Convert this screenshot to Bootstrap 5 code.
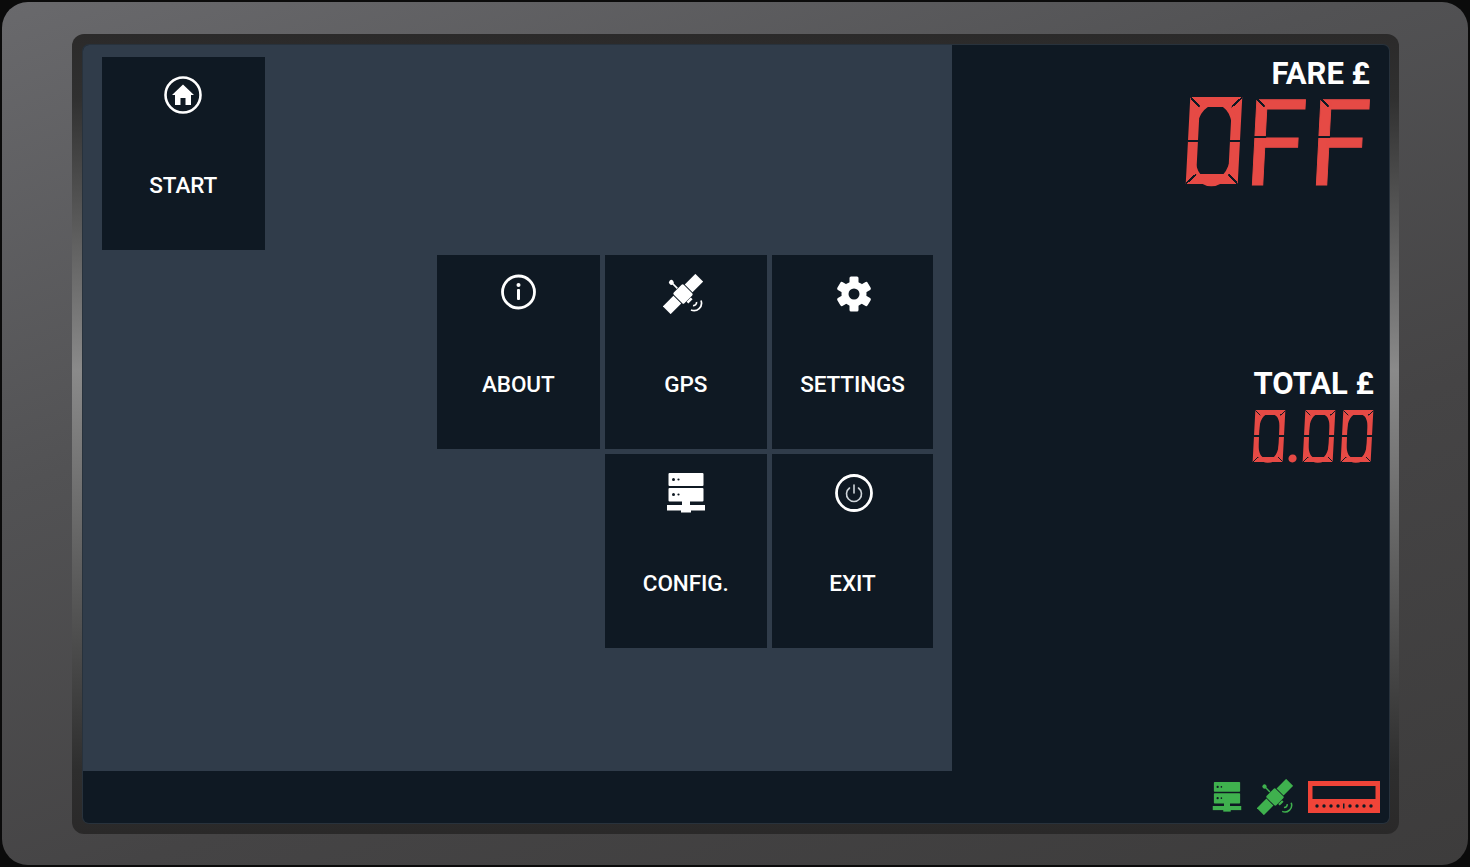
<!DOCTYPE html>
<html lang="en">
<head>
  <meta charset="UTF-8">
  <meta name="viewport" content="width=device-width, initial-scale=1.0">
  <title>Taximeter</title>
  <link href="https://cdn.jsdelivr.net/npm/bootstrap@5.3.0/dist/css/bootstrap.min.css" rel="stylesheet">
  <style>
    html, body { height: 867px; overflow: hidden; }
    body { background: #0b0b0b; padding: 2px; font-family: Roboto, "Liberation Sans", sans-serif; }
    .bezel {
      width: 1466px; height: 863px; padding: 32px 69px 31px 70px; border-radius: 26px;
      background: linear-gradient(160deg, #69696c 0%, #525254 35%, #454445 65%, #3d3c3c 100%);
    }
    .frame {
      height: 100%; padding: 11px 10px 11px 11px; border-radius: 12px;
      background: linear-gradient(to bottom, #2b2a2a 0%, #303030 8%, #8a8a8a 42%, #6b6b6b 60%, #2e2e2e 92%, #2a2929 100%);
    }
    .screen { height: 100%; background: #0f1923; border-radius: 6px; overflow: hidden; box-shadow: 0 0 0 1px #28323c; }
    .left-col { width: 869px; }
    .menu-panel {
      height: 726px; background: #303c4a; padding: 12px 0 0 19px;
      display: grid; gap: 5px;
      grid-template-columns: 162.5px 162.5px 162.5px 162.5px 161px;
      grid-template-rows: 193px 194px 194px;
    }
    .tile { background: #0f1923; color: #fff; padding-top: 19px; }
    .tile-icon { display: block; width: 40px; height: 40px; }
    .tile-shift { margin-left: -6px; }
    .tile-label { margin-top: 59px; font-size: 22.5px; font-weight: 500; line-height: 1; letter-spacing: -.1px; }
    .start-label { margin-top: 58px; }
    .r2c3 { grid-area: 2 / 3; } .r2c4 { grid-area: 2 / 4; } .r2c5 { grid-area: 2 / 5; }
    .r3c4 { grid-area: 3 / 4; } .r3c5 { grid-area: 3 / 5; }
    .readout-col { padding: 13px 0 8px; color: #fff; }
    .readout-label { font-size: 31px; font-weight: 700; line-height: 1; letter-spacing: 0; }
    .fare-label { margin-right: 19px; }
    .total-label { margin: 184px 15px 0 0; }
    .seg-row { --g: #0f1923; --red: #e64a45; display: flex; color: var(--red); font-family: Roboto, sans-serif; }
    .seg-big { --sw: 10px; gap: 13px; margin: 8px 23px 0 0; font-size: 120px; height: 87px; }
    .seg-small { --sw: 5.5px; gap: 8px; margin: 11px 17px 0 0; font-size: 72px; height: 52px; }
    .seg-cell { position: relative; display: flex; justify-content: center; height: 100%; line-height: 1; align-items: center; transform: skewX(-3deg); }
    .seg-big .seg-cell { width: 51px; }
    .seg-big .seg-o { width: 52px; margin-right: -2px; }
    .seg-small .seg-cell { width: 30px; }
    .seg-small .seg-dot { width: 4px; }
    .seg-glyph { display: block; }
    .seg-small .seg-dot .seg-glyph { transform: translateY(2px); }
    .glyph-o { font-weight: 300; transform: translateY(3px) scaleX(.72); }
    .glyph-f { font-weight: 400; transform: translateY(3px) scaleX(.92); -webkit-text-stroke: 1px var(--red); }
    .glyph-zero { font-weight: 300; transform: translateY(2px) scaleX(.9); }
    /* square housing + the thin gaps between the display segments */
    .seg-frame::before { content: ""; position: absolute; inset: 0; border: var(--sw) solid var(--red); }
    .seg-frame::after, .seg-stem::after {
      content: ""; position: absolute; inset: 0;
      --tl: linear-gradient(45deg, transparent 44%, var(--g) 44% 56%, transparent 56%);
      --tr: linear-gradient(135deg, transparent 44%, var(--g) 44% 56%, transparent 56%);
      --bar: linear-gradient(var(--g), var(--g));
    }
    .seg-frame::after {
      background:
        var(--tl) 0 0 / var(--sw) var(--sw) no-repeat,
        var(--tr) 100% 0 / var(--sw) var(--sw) no-repeat,
        var(--tr) 0 100% / var(--sw) var(--sw) no-repeat,
        var(--tl) 100% 100% / var(--sw) var(--sw) no-repeat,
        var(--bar) 0 50% / var(--sw) 2px no-repeat,
        var(--bar) 100% 50% / var(--sw) 2px no-repeat;
    }
    .seg-stem::after {
      background:
        var(--tl) 2px 0 / var(--sw) var(--sw) no-repeat,
        var(--bar) 2px 46% / 13px 2px no-repeat;
    }
    .status-icons { margin-right: 9px; gap: 15px; }
    .status-green { color: #3fb14e; }
  </style>
</head>
<body>
  <svg width="0" height="0" class="position-absolute">
    <symbol id="ico-sat" viewBox="0 0 40 40">
      <g transform="rotate(-45 20 20)" fill="currentColor">
        <rect x="-3" y="14.500" width="15" height="11" />
        <rect x="13" y="12.500" width="14" height="15" rx="1.500" />
        <rect x="28" y="14.500" width="15" height="11" />
        <rect x="19.200" y="4" width="1.600" height="8" />
        <circle cx="20" cy="3.500" r="2.400" />
        <rect x="17" y="28" width="6" height="2.500" />
      </g>
      <g fill="none" stroke="currentColor" stroke-width="1.700">
        <path d="M30 31.500a3 3 0 0 0 3.500-3.500" />
        <path d="M28 36a7.500 7.500 0 0 0 10-9.500" />
      </g>
    </symbol>
    <symbol id="ico-server" viewBox="0 0 40 40">
      <rect x="2.500" y="0" width="35" height="13" rx="1" fill="currentColor" />
      <rect x="2.500" y="15" width="35" height="13.500" rx="1" fill="currentColor" />
      <rect x="16" y="28" width="8" height="4" fill="currentColor" />
      <rect x="1" y="32" width="38" height="5.500" fill="currentColor" />
      <rect x="15" y="37" width="10" height="2.500" fill="currentColor" />
      <g fill="#0f1923">
        <circle cx="7.500" cy="6.500" r="1.500" /><circle cx="12.500" cy="6.500" r="1.100" />
        <circle cx="7.500" cy="21.500" r="1.500" /><circle cx="12.500" cy="21.500" r="1.100" />
      </g>
    </symbol>
  </svg>

  <div class="bezel">
    <div class="frame">
      <div class="screen d-flex">
        <div class="left-col flex-shrink-0">
          <div class="menu-panel">
            <div class="tile d-flex flex-column align-items-center">
              <svg class="tile-icon" viewBox="0 0 40 40"><circle cx="20" cy="19" r="17.500" fill="none" stroke="#fff" stroke-width="2.600"/><path fill="#fff" d="M20 8.500 31 19h-3v10h-5.500v-7h-5v7H12V19H9z"/></svg>
              <div class="tile-label start-label">START</div>
            </div>
            <div class="tile r2c3 d-flex flex-column align-items-center">
              <svg class="tile-icon" viewBox="0 0 40 40"><circle cx="20.500" cy="18" r="16" fill="none" stroke="#fff" stroke-width="2.800"/><circle cx="20.500" cy="11" r="2" fill="#fff"/><rect x="19" y="15" width="3" height="11" rx="1" fill="#fff"/></svg>
              <div class="tile-label">ABOUT</div>
            </div>
            <div class="tile r2c4 d-flex flex-column align-items-center">
              <svg class="tile-icon tile-shift" viewBox="0 0 40 40" color="#fff"><use href="#ico-sat"/></svg>
              <div class="tile-label">GPS</div>
            </div>
            <div class="tile r2c5 d-flex flex-column align-items-center">
              <svg class="tile-icon" viewBox="0 0 40 40"><g fill="#fff" transform="translate(21 20)">
                <rect x="-4.500" y="-17.500" width="9" height="35" rx="1.500"/>
                <rect x="-4.500" y="-17.500" width="9" height="35" rx="1.500" transform="rotate(60)"/>
                <rect x="-4.500" y="-17.500" width="9" height="35" rx="1.500" transform="rotate(120)"/>
                <circle r="12.500"/></g><circle cx="21" cy="20" r="5.500" fill="#0f1923"/></svg>
              <div class="tile-label">SETTINGS</div>
            </div>
            <div class="tile r3c4 d-flex flex-column align-items-center">
              <svg class="tile-icon" viewBox="0 0 40 40" color="#fff"><use href="#ico-server"/></svg>
              <div class="tile-label">CONFIG.</div>
            </div>
            <div class="tile r3c5 d-flex flex-column align-items-center">
              <svg class="tile-icon" viewBox="0 0 40 40"><circle cx="21" cy="20" r="17.500" fill="none" stroke="#fff" stroke-width="2.800"/><path d="M21 12v8" stroke="#cfd5da" stroke-width="1.600" fill="none" stroke-linecap="round"/><path d="M16.500 15a7.500 7.500 0 1 0 9 0" stroke="#cfd5da" stroke-width="1.600" fill="none" stroke-linecap="round"/></svg>
              <div class="tile-label">EXIT</div>
            </div>
          </div>
        </div>

        <div class="readout-col flex-grow-1 d-flex flex-column align-items-end">
          <div class="readout-label fare-label">FARE £</div>
          <div class="seg-row seg-big">
            <span class="seg-cell seg-o seg-frame"><span class="seg-glyph glyph-o">O</span></span>
            <span class="seg-cell seg-stem"><span class="seg-glyph glyph-f">F</span></span>
            <span class="seg-cell seg-stem"><span class="seg-glyph glyph-f">F</span></span>
          </div>
          <div class="readout-label total-label">TOTAL £</div>
          <div class="seg-row seg-small">
            <span class="seg-cell seg-frame"><span class="seg-glyph glyph-zero">0</span></span>
            <span class="seg-cell seg-dot"><span class="seg-glyph">.</span></span>
            <span class="seg-cell seg-frame"><span class="seg-glyph glyph-zero">0</span></span>
            <span class="seg-cell seg-frame"><span class="seg-glyph glyph-zero">0</span></span>
          </div>
          <div class="status-icons mt-auto d-flex align-items-center status-green">
            <svg width="30" height="30" viewBox="0 0 40 40"><use href="#ico-server"/></svg>
            <svg width="36" height="36" viewBox="0 0 40 40"><use href="#ico-sat"/></svg>
            <svg width="72" height="32" viewBox="0 0 72 32">
              <rect width="72" height="32" fill="#f04438"/>
              <rect x="4.500" y="5" width="63" height="13" fill="#0f1923"/>
              <g fill="#0f1923">
                <circle cx="9" cy="25" r="1.700"/><circle cx="16" cy="25" r="1.700"/><circle cx="23" cy="25" r="1.700"/><circle cx="30" cy="25" r="1.700"/>
                <rect x="35" y="22.500" width="1.500" height="5"/><circle cx="42" cy="25" r="1.700"/><circle cx="49" cy="25" r="1.700"/><circle cx="56" cy="25" r="1.700"/><circle cx="63" cy="25" r="1.700"/>
              </g>
            </svg>
          </div>
        </div>
      </div>
    </div>
  </div>

  <script src="https://cdn.jsdelivr.net/npm/bootstrap@5.3.0/dist/js/bootstrap.bundle.min.js"></script>
</body>
</html>
